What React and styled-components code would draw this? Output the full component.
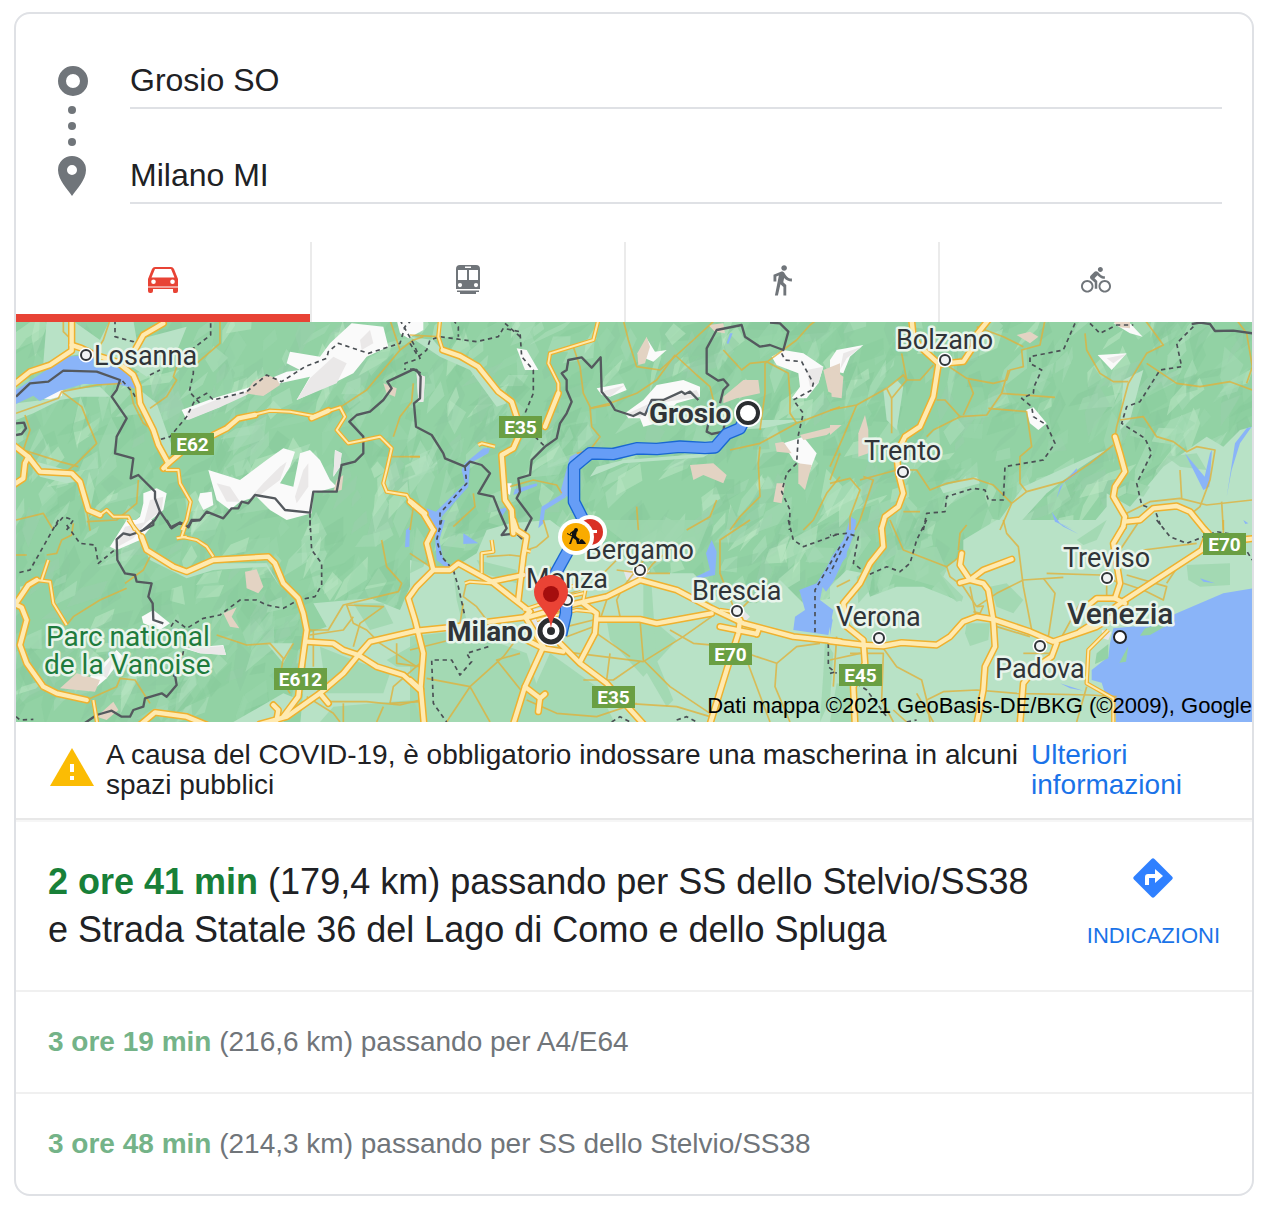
import React from "react";
import styled, { createGlobalStyle, css } from "styled-components";
import { MdDirectionsWalk, MdDirectionsBike } from "react-icons/md";

// Each tile is drawn in its own grid, three units to one map pixel.
const tiles = [
  {
    x: -16,
    y: -2,
    lowland: [
      "140,0 215,0 300,60 330,0 400,0 410,60 560,20 520,120 440,170 380,130 260,100 190,110 130,130",
      "48,250 130,240 190,210 300,200 330,230 240,230 180,240 100,280 48,300",
      "420,210 470,250 520,390 500,420 470,340 430,260",
      "90,420 200,450 240,480 200,490 120,470",
    ],
    snow: [
      "1055,10 1150,20 1165,80 1100,110 1060,160 1000,190 890,240 930,170 840,190 800,220 740,220 660,260 560,300 545,270 640,235 740,205 860,155 900,150 860,130 870,95 960,110 990,70",
      "625,450 690,470 720,480 800,420 850,385 885,395 870,440 840,490 880,500 900,400 930,390 960,420 990,480 1010,500 940,520 935,580 860,600 810,570 770,530 720,545 690,570 650,540",
      "600,520 635,515 640,555 610,570 595,540",
      "430,520 470,505 500,520 490,570 440,610 370,630 420,590 430,550",
      "1190,0 1270,0 1270,30 1225,55 1200,40",
      "1005,390 1025,400 1020,440 1000,470",
      "120,235 190,205 185,228 150,238",
    ],
    snowShade: [
      "1000,110 1040,130 1010,190 890,240 930,175",
      "560,275 660,235 760,210 740,225 660,262 565,300",
      "840,440 860,425 840,480 780,525 750,535 790,490",
      "910,450 925,430 925,500 890,550 885,530",
      "650,490 690,500 720,545 680,545",
      "1005,390 1025,400 1020,440 1000,470",
      "450,540 490,530 485,570 430,615",
      "1080,60 1110,30 1120,70 1085,90",
    ],
    rock: [
      "760,185 800,165 830,175 840,195 790,228 735,220",
      "1150,190 1190,205 1185,230 1160,220",
      "1010,480 1030,465 1025,510 1000,515",
    ],
    water: ["48,210 140,150 190,112 260,105 380,145 415,165 410,207 350,192 250,192 180,212 120,243 100,227 48,252"],
    minor: [
      "190,0 190,35 215,60",
      "330,0 310,60 285,100",
      "660,0 660,70 590,130 530,140 520,170 530,180 500,230 450,265",
      "48,280 175,235 185,215 290,195 365,190",
      "185,215 245,260 265,310 290,370 230,430 205,450",
      "75,285 90,330 70,390 180,425 235,440",
      "390,200 400,250 430,310 460,330",
      "1020,262 1100,210 1200,90 1170,0",
      "1200,90 1240,60 1270,50",
      "1175,410 1260,410",
      "1180,350 1200,290 1235,245 1240,190",
      "415,480 410,550 350,600 260,605",
      "48,600 130,580 160,630",
      "265,600 270,630 260,570",
      "1240,560 1230,630",
    ],
    dashed: [
      "345,0 345,50 400,65 405,80",
      "632,10 632,45 580,85 580,160 568,215 600,250",
      "1235,0 1215,20 1200,70 1105,100 1015,70 985,95 980,115 915,140 845,185 800,165 740,215 640,240 620,220 585,240 560,290 510,350 475,360 440,290 400,220 365,180",
      "1200,0 1240,70 1260,115 1215,130 1215,150",
      "930,580 930,630",
      "450,165 480,150",
      "165,620 190,590 220,600 200,630",
    ],
    border: [
      "48,230 90,190 145,185 190,152 290,155 360,180 350,210 335,230 380,295 350,350 345,400 400,415 392,475 415,465 465,515 465,535 480,575 515,625 540,608 565,620 575,600 600,600 620,575 670,595 695,565 715,565 725,545 745,550 765,525 825,535 855,570 930,578 940,515 1010,515 1025,435 1065,425 1090,400 1090,350 1048,305 1070,285 1110,275 1150,240 1175,205 1162,185 1240,148 1262,160",
      "48,310 72,308 78,325 65,342 48,345",
      "480,575 465,600 430,630",
    ],
    medium: [
      "760,285 810,272 870,275 940,288 1020,262 1035,290 1010,330 1045,370 1140,350 1175,385 1160,450 1150,490 1160,515 1220,525 1240,560",
      "495,440 500,450 535,450 540,490 572,545 560,600 545,630",
      "300,585 320,570 340,590 385,590 405,630",
    ],
    highway: [
      "40,195 90,155 150,135 215,92 215,0",
      "215,75 245,85 285,105 350,125 400,165 415,200 420,250 460,330 475,375 505,430 540,400",
      "405,90 430,45 490,10",
      "640,345 680,325 715,295 765,285",
      "935,294 985,272",
      "40,375 85,410 120,455 215,460 240,485 265,570 300,585",
      "40,495 70,475 75,430 85,410",
      "505,430 490,445",
      "1232,545 1275,580",
    ],
  },
  {
    x: -16,
    y: 198,
    lowland: [
      "940,250 1110,235 1200,270 1230,200 1300,140 1300,620 900,620 925,340 980,320",
      "800,370 880,370 850,430",
      "420,60 460,100 540,150 650,130 800,130 840,200 800,140 640,150 560,175 450,120",
      "850,520 900,540 850,606 700,606",
      "60,200 100,190 60,250",
    ],
    veg: [
      "960,380 1060,420 1170,460 1150,520 980,520",
      "1160,420 1250,370 1280,440 1190,440",
      "1060,250 1150,250 1180,310 1110,330",
      "1000,560 1240,540 1270,606 960,606",
    ],
    snow: [
      "465,0 450,25 420,60 350,90 330,80 380,0",
      "425,290 460,270 510,310 480,330 430,310",
      "550,385 670,375 678,405 600,400",
      "270,470 350,390 370,410 320,475 290,500",
    ],
    snowShade: ["375,20 440,5 400,55 345,85", "560,385 670,378 678,405 600,400", "300,460 350,395 320,475"],
    rock: [
      "735,155 770,148 790,200 775,220 740,205",
      "670,280 710,262 695,290 718,325 690,320",
      "180,505 230,460 300,480 285,515",
      "290,590 340,545 355,570 320,600",
    ],
    water: ["1218,30 1230,20 1228,80 1215,82"],
    minor: [
      "1145,60 1160,140 1205,190 1195,215 1030,255 985,330 930,330",
      "1040,255 1060,310 1100,330 1140,370 1250,440",
      "1060,290 1030,330 930,345",
      "1040,255 1150,260 1080,310 1060,380",
      "1260,430 1180,500 1170,550 1260,545",
      "970,545 1100,545 1200,555 1260,540",
      "650,345 740,375 810,370 850,415 840,470 870,520",
      "380,205 300,240 220,290 200,315",
      "450,110 430,150 375,190",
      "220,10 215,45 185,60 170,100 140,105",
      "48,105 80,105",
      "260,540 350,500 360,475 405,480 450,550",
      "880,370 850,420",
      "1190,370 1190,430 1260,440",
      "1030,550 1030,606",
      "940,330 940,440",
      "920,530 1000,580 1020,606",
      "1130,606 1150,560",
    ],
    dashed: [
      "175,0 90,150 48,160",
      "200,15 240,70 285,75 295,130 350,85",
      "930,0 935,90 965,130 965,195 945,230 895,240 850,265 800,255 770,240 720,240 660,285 610,295 560,325 525,300 510,325",
      "555,370 545,420 520,470",
      "48,590 60,600 100,598",
    ],
    border: [
      "460,0 460,15 420,35 390,45 370,40 350,58 352,120 375,160 405,165 410,185 455,190 445,230 458,250 460,300 490,310",
      "500,0 512,22 540,8 565,22 575,3 600,0",
      "525,465 530,495 500,530 485,520 435,535 430,560 400,570 390,590 365,590 335,572 290,585 250,612",
    ],
    medium: [
      "385,0 425,50",
      "555,20 545,50 590,60 620,80 640,110",
      "530,55 560,50",
      "110,180 150,185 160,250 200,315",
      "145,120 125,180",
      "280,540 292,612",
    ],
    highway: [
      "425,50 440,90 520,140 560,155 640,120 720,115 805,110 825,130 850,190 895,235 910,280 920,330 905,440 895,530 850,590",
      "40,250 65,262 80,300 60,375 80,430 130,500 170,520 260,540",
      "48,250 85,195 110,180",
      "420,615 465,577 560,590 620,615",
      "920,365 1000,370 1030,390 1075,405 1130,440 1210,465 1260,510",
      "1245,333 1110,365 1075,405 1030,460 960,520 860,590 780,612",
      "820,555 835,570 830,600",
      "960,520 985,550",
    ],
  },
  {
    x: 394,
    y: -2,
    lowland: [
      "0,50 70,60 100,95 180,130 250,200 290,250 260,260 180,150 90,110",
      "560,440 640,420 900,400 880,412 640,430 540,470",
      "960,330 1050,300 1180,300 1060,325",
    ],
    snow: [
      "320,85 350,90 385,150 345,150",
      "710,55 735,95 770,90 730,125 705,115",
      "560,205 640,190 650,210 600,230 575,225",
      "645,280 700,240 740,195 820,180 870,200 870,230 800,250 740,310 700,320 690,295 655,295",
      "1085,110 1120,90 1180,100 1240,140 1225,190 1190,235 1145,235 1170,200 1165,160 1100,135",
      "1120,370 1180,350 1220,400 1200,450 1150,420",
      "0,10 25,5 30,30 0,50",
      "20,160 45,170 40,245 25,245",
      "285,490 305,490 300,525 285,515",
    ],
    snowShade: [
      "655,280 720,250 860,210 870,230 740,250 690,290",
      "20,160 45,170 40,245 25,245",
      "1190,150 1240,140 1225,190 1200,200",
      "575,215 645,195 600,230",
    ],
    rock: [
      "682,100 710,50 720,80 705,130 685,135",
      "940,230 1000,180 1045,180 1050,220 980,235 940,250",
      "1240,150 1290,130 1290,230 1255,215",
      "1095,370 1120,365 1145,400 1100,395",
      "1165,430 1205,435 1185,510 1165,490",
      "840,435 910,430 950,465 940,490 880,465 850,480",
      "1170,345 1290,315 1250,345 1180,360",
      "1100,490 1125,490 1115,550 1090,545",
      "895,15 940,10 945,40 915,35",
    ],
    water: [
      "165,430 220,385 240,385 235,400 180,430 175,500 95,590 88,630 65,620 50,565 78,575 165,490 155,450",
      "480,410 520,390 540,420 490,460 475,530 450,520",
      "385,625 395,560 460,520 470,530 405,570 400,610",
      "315,508 380,490 382,497 310,525",
      "262,570 295,560 275,590",
      "950,70 960,40 968,40 955,72",
    ],
    minor: [
      "640,0 655,60 680,140 750,150 850,60 915,0",
      "795,105 740,180 680,220 600,250 540,265",
      "490,80 510,140 520,220 540,260 545,320 570,350 540,390 500,400",
      "540,265 600,255",
      "795,105 860,165 900,200 910,240",
      "940,90 995,150 1020,130 1070,125 1135,160 1140,230 1140,280 1160,310",
      "1160,60 1200,15 1220,0",
      "1050,330 1065,220 1065,130 1160,60",
      "960,390 1050,370 1160,310 1290,260",
      "1050,380 1045,430 1050,530 990,590 960,630",
      "300,500 370,480 440,495 455,520",
      "190,520 195,560 130,620",
      "920,540 900,590 830,630",
      "680,560 685,630",
      "1290,470 1250,520 1210,600 1180,630",
      "0,45 80,50",
      "1260,480 1290,400",
      "0,410 30,410",
    ],
    dashed: [
      "0,70 25,110 50,90 60,60 90,50 200,65 265,50 280,25 330,35 335,110 370,150 370,220 345,280",
      "375,350 405,380",
      "130,0 145,20 145,50",
      "1115,100 1125,120 1175,125 1210,190 1205,210 1150,240 1180,280 1165,345 1160,430 1130,460 1115,515 1140,570 1138,630",
      "165,440 170,490 90,580 90,630",
      "285,10 330,50",
    ],
    border: [
      "0,148 20,150 32,170 30,235 12,250 18,320 65,345 100,400 105,415 165,440 180,425 215,435 240,460 205,520 250,530 270,580 290,625 275,645 320,640 335,655 365,595 320,535 330,515 325,475 360,465 365,420 405,380 440,355 450,310 470,280 485,245 470,210 470,180 455,160 470,150 475,120 515,112 545,143 572,112 575,215 600,245 615,270 670,288 690,278 705,285 725,240 760,240 815,215 825,222 840,215 865,240",
      "895,310 890,335 905,342 940,335 945,300",
      "930,250 940,210 955,195 940,178 925,182 890,160 890,85 920,30 995,15 1005,50 1050,80 1080,75 1120,90 1135,35 1110,10 1080,8",
    ],
    medium: ["98,90 85,50 90,0", "565,0 550,60 420,100 415,130 430,160 445,190 445,220", "205,375 215,370 255,380"],
    highway: [
      "98,90 150,108 205,140 265,215 305,245 320,290 330,340 310,385 275,405 285,540 305,570 310,640",
      "445,220 425,270 405,320",
      "0,545 40,580 70,630",
    ],
  },
  {
    x: 394,
    y: 198,
    lowland: [
      "0,120 120,150 200,100 230,30 300,10 420,0 500,60 640,110 700,160 850,160 930,240 1040,250 1110,180 1180,250 1290,230 1290,620 0,620",
    ],
    veg: [
      "0,350 160,330 350,400 420,620 0,620",
      "420,400 560,500 620,620 320,620",
      "590,300 740,310 800,360 700,470 600,360",
      "130,160 170,300 160,320 140,240",
      "700,180 725,200 740,420 790,540 770,560 700,440",
      "1245,360 1270,400 1260,540 1230,606 1240,460",
      "200,120 320,150 320,190 220,160",
      "20,20 60,80 40,140 0,160",
      "560,0 900,0 860,100 780,130 700,110",
    ],
    snow: [],
    rock: [],
    urban: ["350,270 420,260 460,300 460,380 400,370 350,330", "990,260 1020,290 1000,310 960,290", "640,150 720,150 700,180 650,180"],
    water: [
      "72,0 105,0 88,60 100,120 130,140 120,152 80,120 75,50",
      "160,40 205,70 160,72",
      "905,60 920,95 915,165 870,175 858,170 900,150 888,100",
      "1310,50 1310,110 1240,190 1230,240 1270,270 1255,345 1150,330 1155,290 1185,270 1168,210 1220,190 1260,125",
    ],
    minor: [
      "400,0 415,50 380,80 350,90",
      "620,150 700,160 780,160",
      "230,110 300,105 340,110",
      "170,185 160,230 200,260 230,300 240,310",
      "410,220 480,260 560,240",
      "460,395 700,425 820,350 905,290",
      "690,300 700,420 780,500 900,580",
      "780,330 850,370 960,380 1040,410 1100,430 1160,380 1230,370",
      "1100,430 1095,500 1140,606",
      "180,500 240,606",
      "50,475 180,500 280,410 310,370",
      "180,500 120,590 110,606",
      "0,390 120,360 200,340",
      "330,400 260,420 340,520",
      "560,340 660,410",
      "470,350 550,320",
      "470,320 550,300",
      "600,400 590,480 660,580",
      "690,425 610,480 520,480",
      "740,70 640,200 620,240 630,290",
      "790,80 730,130 690,180",
      "1020,0 930,60 930,160 970,260",
      "1000,260 1060,200",
      "1000,400 960,420",
      "1010,420 1080,606",
      "650,550 800,560 900,590",
      "350,540 440,580 560,590 680,550",
      "0,100 60,140",
      "160,250 150,310 240,320",
      "420,140 450,230 540,200 620,120",
      "590,240 570,300",
    ],
    dashed: [
      "95,0 80,60 95,110 130,150 145,200 165,290",
      "235,380 170,400 185,425 150,465 125,420 65,420 70,550 110,606",
      "1135,0 1150,60 1180,80 1290,40",
      "1290,80 1215,210 1215,350 1255,370 1255,440 1280,460",
      "605,606 630,590 660,606",
      "800,600 830,590 860,606",
    ],
    border: [],
    medium: [
      "245,60 250,95 215,100 215,160",
      "345,90 362,95",
      "165,190 180,185 245,190",
      "340,270 430,240 520,220",
      "380,300 500,270 550,275",
      "480,200 530,190 520,240",
      "930,270 1000,280",
    ],
    highway: [
      "70,30 50,70 70,150 20,200 -5,235 15,300 40,400 32,500 42,612",
      "70,150 120,150 145,130 245,185 360,275",
      "310,0 320,30 350,50 340,110 325,240",
      "245,185 340,165",
      "15,333 120,322 240,305 360,290 500,250 590,230 690,180 800,210 905,265 1000,310 1150,350 1290,365",
      "360,275 345,290 400,380",
      "400,380 345,500 310,612",
      "345,500 390,535 405,522",
      "390,535 385,575",
      "330,350 400,385 460,395",
      "450,370 510,430 590,490 700,612",
      "520,250 560,280 555,340 510,425",
      "565,298 690,298 740,310 905,280",
      "990,300 985,340 950,450 900,612",
      "930,320 1040,342",
      "0,480 32,508",
      "1040,342 1045,330",
    ],
  },
  {
    x: 814,
    y: -2,
    lowland: [
      "780,620 830,560 830,520 900,560 1000,440 1130,350 1180,380 1230,330 1267,320 1267,640 780,640",
      "160,210 200,180 220,200 200,330 170,300",
      "330,500 440,470 450,490 340,520",
      "580,500 800,400 830,390 740,450 650,520 540,640 480,640",
      "880,180 940,150 900,300 870,330",
    ],
    veg: ["1010,410 1100,400 1130,450 1050,440", "900,480 960,500 940,530 890,520"],
    snow: ["20,90 100,75 60,110 40,160 0,150 0,120", "588,270 610,262 650,310 625,330 600,310", "803,105 890,100 845,150", "850,10 900,10 938,50 900,40"],
    snowShade: ["40,100 95,80 50,115 30,150", "830,115 890,102 850,130"],
    rock: [
      "0,140 40,170 35,235 5,230",
      "85,340 105,285 115,330 115,400 85,410",
      "560,45 600,35 625,50 600,70",
      "0,315 35,315 0,345",
      "850,5 900,5 900,25 870,22",
    ],
    water: [
      "690,500 740,445 742,460 700,490 680,535",
      "1065,400 1120,510 1138,500 1146,390 1140,400 1124,470",
      "1265,320 1230,370 1205,450 1190,530 1215,370 1250,325",
      "665,575 690,610 730,628 675,605",
    ],
    minor: [
      "0,270 80,255 170,205 220,165 230,180 185,235 185,340",
      "170,205 185,235",
      "80,255 40,350 0,440",
      "215,100 230,180 270,180 310,135",
      "350,135 410,175 490,190 530,180 540,150 580,140 575,90 630,75 645,0",
      "415,180 430,220 400,285",
      "320,240 345,240 390,290 310,330 290,350",
      "390,290 470,285 515,220 535,150",
      "515,220 675,232",
      "475,265 590,275 605,380 570,410 570,490 590,515",
      "590,515 700,485 780,430 850,375",
      "590,515 545,550 510,630",
      "230,450 260,450 300,510 350,490 430,475 490,495 545,550",
      "765,40 770,90 810,160 850,185 895,185",
      "945,0 1000,75 950,100 895,190 860,320 855,350",
      "950,130 1040,190 1110,200 1200,185 1267,210",
      "1220,0 1250,40 1267,140 1250,190",
      "870,300 940,290 980,350 1030,365 1070,395 1100,380 1155,390 1140,480 1110,560 1085,580",
      "890,580 960,545 1050,535 1130,555 1267,540",
      "1050,450 1055,535",
      "1175,545 1180,630",
      "0,490 60,475 90,510 60,590 60,630",
      "100,470 130,480 90,600 75,630",
      "90,480 200,450",
      "440,20 520,50 580,80",
      "220,575 270,575",
    ],
    dashed: [
      "735,10 700,90 600,110 600,130 635,150 612,200 610,220 575,235 605,260 610,290 650,315 675,370 640,420 525,440 520,540 475,540 465,510 430,505 350,530 345,575 290,580 280,630",
      "780,10 810,40 860,15 910,15",
      "1090,20 1040,70 1055,140 990,150 930,245 890,260 875,310 945,355 965,400 920,490 935,555 975,570 995,625",
    ],
    border: ["1085,12 1110,8 1140,12 1155,33 1210,32 1267,40"],
    medium: [],
    highway: [
      "475,0 435,50 430,80 400,125 345,130 325,135 310,230 270,320 225,350 200,400 205,460 220,520 205,560 165,590 155,625",
      "245,0 250,50 270,80 325,130",
      "855,350 870,400 885,455 855,500 850,530 885,590 880,620",
      "885,605 930,600 970,565 1040,558 1080,575 1125,630",
    ],
  },
  {
    x: 814,
    y: 198,
    lowland: [
      "0,200 50,150 100,160 120,230 200,200 280,200 380,240 330,160 400,100 400,60 500,0 1267,0 1267,620 0,620",
    ],
    veg: [
      "200,90 320,80 350,150 340,170 400,230 395,245 320,200 250,180 180,160",
      "300,180 360,200 395,240 380,245",
      "410,310 480,310 475,360 420,378 405,340",
      "480,200 530,190 580,240 550,280 500,260",
      "1070,135 1200,130 1200,195 1110,200 1075,180",
      "740,60 830,0 800,60 760,75",
      "20,490 80,500 70,606 0,606",
      "80,170 130,140 120,210 85,250",
    ],
    snow: [],
    rock: [],
    water: [
      "62,-10 78,0 76,30 58,80 10,185 -12,215 -30,190 5,110 40,60",
      "1267,205 1180,220 1040,280 960,315 850,325 840,370 835,410 785,450 785,480 815,488 825,520 855,540 858,612 1267,612",
      "680,5 745,42 700,20",
      "1110,175 1155,190 1120,185",
      "690,490 760,512 720,505",
      "0,285 8,300 0,345",
      "1240,0 1255,10 1246,12",
    ],
    island: ["930,347 945,325 1040,300 960,345", "800,400 835,372 835,415 795,432", "895,378 888,425 868,428"],
    urban: ["815,330 845,335 835,360 818,355"],
    minor: [
      "180,0 220,90 350,140 390,110",
      "350,140 360,170 400,200 440,260",
      "410,15 390,40 385,90",
      "520,0 530,40 565,80 580,200 605,330",
      "440,260 500,220 580,180 700,172",
      "640,175 675,220 655,350",
      "650,160 810,165 870,190",
      "830,100 830,230",
      "930,0 870,90",
      "890,165 1010,200 1000,240 940,210 880,190",
      "1010,190 1050,130 1110,90",
      "1180,0 1180,40",
      "940,90 1100,70",
      "500,320 600,350",
      "580,400 660,400",
      "160,385 200,440 275,480 290,540",
      "290,540 340,515 440,510 560,520 780,525 860,530",
      "290,540 300,606",
      "190,570 230,606",
      "60,400 160,400 155,540 190,606",
      "0,420 90,400",
      "20,200 60,180",
      "440,260 460,258 450,280 430,275",
      "420,200 440,300",
      "20,350 10,500",
      "690,360 750,250 830,240",
      "260,520 310,606",
      "740,606 770,500",
    ],
    dashed: [
      "290,0 260,60 240,130 210,155 170,140 115,165 70,130 85,50 50,40 0,45",
      "55,50 0,160",
      "980,0 1020,50 1070,70 1160,35 1220,45 1267,120",
      "0,460 20,455",
      "80,490 110,510 170,590",
      "230,606 260,600",
    ],
    border: [],
    medium: ["835,330 775,390 770,490 850,535 850,612"],
    highway: [
      "155,25 160,80 120,130 90,190 40,250 50,320 100,360 105,430 70,500 75,612",
      "0,363 100,375 160,378 215,368 320,375 360,350 400,305 440,290 490,298 600,335 670,365 800,320 850,290",
      "395,100 390,135 420,180 460,190 475,210 490,300 495,380 465,440 460,510 440,612",
      "390,188 420,180 460,150 545,118",
      "680,370 665,410 620,440 580,490 570,612",
      "880,20 850,70 870,190 855,235",
      "1125,30 1135,40 1115,90 885,240 790,310 750,335",
      "885,250 855,235 800,235 770,260",
      "1230,60 1275,55",
    ],
  },
];

const cities = [
  { name: "Losanna", x: 78, y: 43, dot: [70, 33] },
  { name: "Bolzano", x: 880, y: 27, dot: [929, 38] },
  { name: "Trento", x: 848, y: 138, dot: [887, 150] },
  { name: "Bergamo", x: 569, y: 237, dot: [624, 248] },
  { name: "Monza", x: 510, y: 266, dot: [551, 278] },
  { name: "Brescia", x: 676, y: 278, dot: [721, 289] },
  { name: "Verona", x: 820, y: 304, dot: [863, 316] },
  { name: "Treviso", x: 1047, y: 245, dot: [1091, 256] },
  { name: "Padova", x: 979, y: 356, dot: [1024, 324] },
];

const shields = [
  { name: "E62", x: 155, y: 111 },
  { name: "E35", x: 483, y: 94 },
  { name: "E612", x: 258, y: 346 },
  { name: "E35", x: 576, y: 364 },
  { name: "E70", x: 693, y: 321 },
  { name: "E45", x: 823, y: 342 },
  { name: "E70", x: 1187, y: 211 },
];

const routes = [
  {
    time: "2 ore 41 min",
    detail: "(179,4 km) passando per SS dello Stelvio/SS38 e Strada Statale 36 del Lago di Como e dello Spluga",
    main: true,
  },
  { time: "3 ore 19 min", detail: "(216,6 km) passando per A4/E64" },
  { time: "3 ore 48 min", detail: "(214,3 km) passando per SS dello Stelvio/SS38" },
];

// mountain relief: small slanted facets, the same on every render
const makeRelief = () => {
  let seed = 7;
  const random = () => {
    seed = (seed * 16807) % 2147483647;
    return seed / 2147483647;
  };
  const shades = ["#84c898", "#87cb9b", "#9bd7ad", "#a9dcb8", "#b4e2c0", "#8bc9a0", "#9ccfae", "#c3eac9"];
  return Array.from({ length: 1500 }, () => {
    const x = random() * 1236;
    const y = random() * 400;
    const angle = -0.9 + (random() - 0.5) * 1.2;
    const long = 8 + random() * 20;
    const wide = 3 + random() * 8;
    const points = [
      [-long, 0],
      [-long * 0.2, -wide],
      [long, -wide * random()],
      [long * 0.4, wide],
    ]
      .map(([px, py]) => {
        const rx = x + px * Math.cos(angle) - py * Math.sin(angle);
        const ry = y + px * Math.sin(angle) + py * Math.cos(angle);
        return `${rx.toFixed(1)},${ry.toFixed(1)}`;
      })
      .join(" ");
    return { points, fill: shades[Math.floor(random() * shades.length)] };
  });
};

const relief = makeRelief();

const Areas = ({ kind, ...rest }) =>
  tiles.map((tile, i) => (
    <g key={i} transform={`translate(${tile.x} ${tile.y}) scale(0.33333)`} {...rest}>
      {(tile[kind] || []).map((points) => (
        <polygon key={points} points={points} />
      ))}
    </g>
  ));

const Lines = ({ kind, ...rest }) =>
  tiles.map((tile, i) => (
    <g key={i} transform={`translate(${tile.x} ${tile.y}) scale(0.33333)`} fill="none" strokeLinejoin="round" {...rest}>
      {tile[kind].map((points) => (
        <polyline key={points} points={points} />
      ))}
    </g>
  ));

const RouteMap = () => (
  <MapDrawing viewBox="0 0 1236 400" preserveAspectRatio="xMidYMid slice" role="img" aria-label="Mappa">
    <rect width="1236" height="400" fill="#92d2a4" />
    {relief.map((facet, i) => (
      <polygon key={i} points={facet.points} fill={facet.fill} opacity="0.45" />
    ))}
    <Areas kind="lowland" fill="#b8e2c6" />
    <Areas kind="veg" fill="#9fd7af" opacity="0.8" />
    <Areas kind="snow" fill="#fafafa" />
    <Areas kind="snowShade" fill="#eae8e8" />
    <Areas kind="rock" fill="#e3d3c3" />
    <Areas kind="water" fill="#8ab4f8" />
    <Areas kind="island" fill="#94d2a5" />
    <Areas kind="urban" fill="#e4e6e8" />
    <Lines kind="minor" stroke="#e0b23c" strokeWidth="5" opacity="0.8" />
    <Lines kind="dashed" stroke="#4a4f54" strokeWidth="5" strokeDasharray="13 11" />
    <Lines kind="border" stroke="#54595e" strokeWidth="7" />
    <Lines kind="medium" stroke="#efb12f" strokeWidth="13" />
    <Lines kind="highway" stroke="#efb12f" strokeWidth="22" strokeLinecap="round" />
    <Lines kind="medium" stroke="#ffe9a9" strokeWidth="6" />
    <Lines kind="highway" stroke="#ffeab0" strokeWidth="13" strokeLinecap="round" />

    <g transform="translate(394 -2) scale(0.33333)" fill="none" strokeLinejoin="round">
      {[
        ["#1967d2", 38],
        ["#669df6", 30],
      ].map(([stroke, width]) => (
        <g key={stroke} stroke={stroke} strokeWidth={width}>
          <path d="M1008 290 990 325 950 342 915 382 885 384 810 380 740 387 680 385 610 402 540 400 492 440 492 545 525 610" />
          <path d="M484 675 415 800" />
          <path d="M468 840V880L453 945" />
        </g>
      ))}
    </g>

    {cities.map(({ name, x, y, dot }) => (
      <g key={name}>
        <circle cx={dot[0]} cy={dot[1]} r="5" fill="#fff" stroke="#fff" strokeWidth="5" />
        <circle cx={dot[0]} cy={dot[1]} r="5" fill="#f1f3f4" stroke="#303438" strokeWidth="2" />
        <MapLabel x={x} y={y}>
          {name}
        </MapLabel>
      </g>
    ))}
    <circle cx="1104" cy="315" r="6" fill="#fff" stroke="#202124" strokeWidth="2" />
    <MapLabel x="1051" y="302" $size={30} $weight={500}>
      Venezia
    </MapLabel>
    <MapLabel x="30" y="324" $size={28} $color="#1e7b3c">
      Parc national
    </MapLabel>
    <MapLabel x="28" y="352" $size={28} $color="#1e7b3c">
      de la Vanoise
    </MapLabel>
    <MapLabel x="633" y="101" $size={28} $weight={700}>
      Grosio
    </MapLabel>
    <MapLabel x="431" y="319" $size={28} $weight={700}>
      Milano
    </MapLabel>

    {shields.map(({ name, x, y }) => {
      const width = name.length > 3 ? 53 : 43;
      return (
        <g key={`${name}-${x}`}>
          <rect x={x} y={y} width={width} height="22" fill="#6a9f43" />
          <ShieldText x={x + width / 2} y={y + 18}>
            {name}
          </ShieldText>
        </g>
      );
    })}

    <circle cx="732" cy="91" r="14" fill="#fff" />
    <circle cx="732" cy="91" r="10" fill="#fff" stroke="#2b2e31" strokeWidth="4" />

    <circle cx="574" cy="210" r="17" fill="#fff" />
    <circle cx="574" cy="210" r="13" fill="#d93025" />
    <path d="M572 208h9v3h-9z" fill="#fff" />
    <circle cx="560" cy="215" r="18" fill="#fff" />
    <circle cx="560" cy="215" r="14" fill="#f9ab00" />
    <circle cx="560" cy="208" r="2" fill="#111" />
    <path
      d="M554 211l4-3 3 1-1 5 3 3v5h-2l-1-4-3-2-2 6h-2l3-8v-3l-2 2zM551 211l13 6-1 1-12-6zM562 222l2-4 2-1 3 3 1 2z"
      fill="#111"
    />

    <circle cx="535" cy="309" r="15" fill="#fff" />
    <circle cx="535" cy="309" r="11" fill="#fff" stroke="#2b2e31" strokeWidth="5" />
    <circle cx="535" cy="309" r="4" fill="#2b2e31" />
    <path
      d="M535 307c-1-11-5-15-11-23-4-5-6-9-6-14a17 17 0 0 1 34 0c0 5-2 9-6 14-6 8-10 12-11 23z"
      fill="#ea4335"
    />
    <circle cx="535" cy="272" r="8" fill="#a50e0e" />
  </MapDrawing>
);

const WaypointIcons = () => (
  <svg width="32" height="154" viewBox="0 -14 32 154" fill="#70757a" aria-hidden="true">
    <circle cx="15" cy="17" r="11" fill="none" stroke="#70757a" strokeWidth="8" />
    <circle cx="14" cy="46" r="4" />
    <circle cx="14" cy="62" r="4" />
    <circle cx="14" cy="78" r="4" />
    <path d="M14 92a14 14 0 0 0-14 14c0 10 10 20 14 26 4-6 14-16 14-26a14 14 0 0 0-14-14zm0 19a5 5 0 1 1 0-10 5 5 0 0 1 0 10z" />
  </svg>
);

const CarIcon = () => (
  <svg width="30" height="26" viewBox="0 0 30 26" fill="currentColor" fillRule="evenodd">
    <path d="M7 0h16q2 0 3 2l4 10v12q0 2-2 2h-2q-1 0-1-2v-2H5v2q0 2-2 2H2q-2 0-2-2V12L4 2q1-2 3-2zm0 2L3.500 10.500h23L23 2zM5.500 12.500a2.300 2.300 0 1 0 0 4.600 2.300 2.300 0 0 0 0-4.600zm19 0a2.300 2.300 0 1 0 0 4.600 2.300 2.300 0 0 0 0-4.600z" />
    <path d="M0 19.500h30v1H0z" fill="#fff" />
  </svg>
);

const TrainIcon = () => (
  <svg width="24" height="30" viewBox="0 0 24 30" fill="currentColor" fillRule="evenodd">
    <path d="M4 0h16q4 0 4 4v20H0V4q0-4 4-4zm5 1.500v1.500h6V1.500zM2 5v10h9V5zm11 0v10h9V5zM4 18a2 2 0 1 0 0 4.200A2 2 0 0 0 4 18zm16 0a2 2 0 1 0 0 4.200 2 2 0 0 0 0-4.200z" />
    <path d="M1 25.500h22v1.500h-3v2H4v-2H1z" />
  </svg>
);

const WarningIcon = () => (
  <svg width="44" height="44" viewBox="0 0 44 44" aria-hidden="true">
    <path d="M22 0l22 38H0z" fill="#fbbc04" />
    <path d="M20 16h4v8h-4zM20 28h4v4h-4z" fill="#fff" />
  </svg>
);

const TurnIcon = () => (
  <svg width="40" height="40" viewBox="0 0 40 40" aria-hidden="true">
    <path d="M18.500 1q1.500-1.500 3 0L39 18.500q1.500 1.500 0 3L21.500 39q-1.500 1.500-3 0L1 21.500q-1.500-1.500 0-3z" fill="#2f80ff" />
    <path d="M12 27v-8q0-3 3-3h7v-5l8 7-8 7v-5h-6v7z" fill="#fff" />
  </svg>
);

const modes = [
  { name: "Auto", icon: <CarIcon />, selected: true },
  { name: "Mezzi pubblici", icon: <TrainIcon /> },
  { name: "A piedi", icon: <MdDirectionsWalk size={34} /> },
  { name: "Bicicletta", icon: <MdDirectionsBike size={30} /> },
];

const App = () => {
  return (
    <>
      <GlobalStyle />
      <Card>
        <Waypoints>
          <WaypointIcons />
          <Fields>
            <PlaceInput aria-label="Partenza" defaultValue="Grosio SO" />
            <PlaceInput aria-label="Destinazione" defaultValue="Milano MI" />
          </Fields>
        </Waypoints>
        <ModeTabs role="tablist">
          {modes.map(({ name, icon, selected }) => (
            <ModeTab key={name} type="button" role="tab" aria-label={name} aria-selected={!!selected} $selected={selected}>
              {icon}
            </ModeTab>
          ))}
        </ModeTabs>
        <MapBox>
          <RouteMap />
          <Attribution>Dati mappa ©2021 GeoBasis-DE/BKG (©2009), Google</Attribution>
        </MapBox>
        <Notice>
          <WarningIcon />
          <p>A causa del COVID-19, è obbligatorio indossare una mascherina in alcuni spazi pubblici</p>
          <a href="#informazioni">Ulteriori informazioni</a>
        </Notice>
        {routes.map(({ time, detail, main }) => (
          <Route key={time} $main={main}>
            <p>
              <strong>{time}</strong> {detail}
            </p>
            {main && (
              <DirectionsLink href="#indicazioni">
                <TurnIcon />
                INDICAZIONI
              </DirectionsLink>
            )}
          </Route>
        ))}
      </Card>
    </>
  );
};

const GlobalStyle = createGlobalStyle`
  * {
    box-sizing: border-box;
  }

  body {
    margin: 0;
    padding: 12px 18px 16px 14px;
    background: #fff;
    color: #202124;
    font-family: "Liberation Sans", Arial, sans-serif;
  }

  p {
    margin: 0;
  }

  a {
    color: #1a73e8;
    text-decoration: none;
  }
`;

const Card = styled.main`
  overflow: hidden;
  border: 2px solid #dfe1e5;
  border-radius: 16px;
`;

const Waypoints = styled.div`
  display: flex;
  align-items: center;
  gap: 40px;
  padding: 36px 30px 38px 42px;
`;

const Fields = styled.div`
  flex: 1;
  display: flex;
  flex-direction: column;
  gap: 36px;
`;

const PlaceInput = styled.input`
  width: 100%;
  height: 59px;
  padding: 4px 0 0;
  border: none;
  border-bottom: 2px solid #dfe1e5;
  outline: none;
  background: none;
  color: inherit;
  font: inherit;
  font-size: 32px;
`;

const ModeTabs = styled.div`
  display: grid;
  grid-template-columns: 294fr 314fr 314fr 314fr;
`;

const ModeTab = styled.button`
  display: flex;
  align-items: center;
  justify-content: center;
  height: 80px;
  padding: 4px 0 8px;
  border: none;
  background: none;
  color: #70757a;

  & + & {
    border-left: 2px solid #ebebeb;
  }

  ${({ $selected }) =>
    $selected &&
    css`
      padding-bottom: 0;
      border-bottom: 8px solid #e84335;
      color: #e84335;
    `}
`;

const MapBox = styled.div`
  position: relative;
`;

const MapDrawing = styled.svg`
  display: block;
  width: 100%;
  height: 400px;
`;

const MapLabel = styled.text`
  fill: ${({ $color }) => $color || "#303438"};
  stroke: #e9f5ec;
  stroke-width: 5px;
  stroke-linejoin: round;
  paint-order: stroke;
  font-family: Roboto, sans-serif;
  font-size: ${({ $size }) => $size || 27}px;
  font-weight: ${({ $weight }) => $weight || 400};
`;

const ShieldText = styled.text`
  fill: #fff;
  text-anchor: middle;
  font-family: Roboto, sans-serif;
  font-size: 19px;
  font-weight: 700;
`;

const Attribution = styled.span`
  position: absolute;
  right: 0;
  bottom: 3px;
  color: #000;
  font-size: 22px;
  line-height: 26px;
  white-space: nowrap;
`;

const Notice = styled.div`
  display: flex;
  align-items: center;
  gap: 12px;
  padding: 18px 34px;
  border-bottom: 2px solid #e8e8e8;
  box-shadow: 0 2px 0 #f6f6f6;
  font-size: 28px;
  line-height: 30px;

  svg {
    flex: none;
  }

  p {
    flex: 1;
  }

  a {
    width: 187px;
  }
`;

const Route = styled.section`
  display: flex;
  justify-content: space-between;
  gap: 40px;
  padding: 36px 32px;
  color: #70757a;
  font-size: 28px;
  line-height: 28px;

  & + & {
    border-top: 2px solid #f0f0f0;
  }

  strong {
    color: #74b388;
  }

  ${({ $main }) =>
    $main &&
    css`
      margin-top: 2px;
      color: #202124;
      font-size: 36px;
      line-height: 48px;

      strong {
        color: #188038;
      }
    `}
`;

const DirectionsLink = styled.a`
  display: flex;
  flex: none;
  flex-direction: column;
  align-items: center;
  gap: 24px;
  font-size: 22px;
  line-height: 28px;
`;

export default App;
